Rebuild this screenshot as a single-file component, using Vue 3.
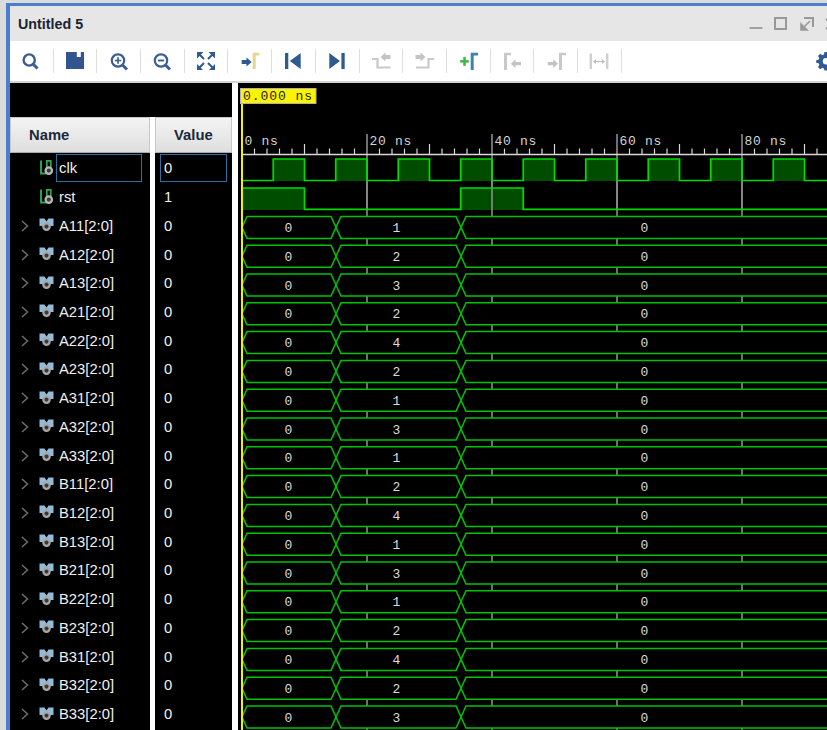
<script setup>
const names = ['A11','A12','A13','A21','A22','A23','A31','A32','A33','B11','B12','B13','B21','B22','B23','B31','B32','B33']
const mids = [1,2,3,2,4,2,1,3,1,2,4,1,3,1,2,4,2,3]
const signals = [
  { name: 'clk', value: '0', scalar: true, focus: true },
  { name: 'rst', value: '1', scalar: true },
  ...names.map((n) => ({ name: n + '[2:0]', value: '0', scalar: false })),
]
const pitch = 28.8
const X0 = 242
const scale = 6.25
const buses = mids.map((m, i) => {
  const c = 227.4 + i * pitch
  const t = c - 11
  const b = c + 11
  return {
    m,
    c,
    segs: [
      `242,${c} 247,${t} 331,${t} 336,${c} 331,${b} 247,${b}`,
      `336,${c} 341,${t} 456,${t} 461,${c} 456,${b} 341,${b}`,
      `461,${c} 466,${t} 840,${t} 840,${b} 466,${b}`,
    ],
  }
})
const at = (ns) => X0 + ns * scale
const minor = Array.from({ length: 48 }, (_, i) => X0 + 12.5 * i).filter((x, i) => i % 5 !== 0)
const major = [10, 30, 50, 70, 90].map((n) => at(n) )
const labels = [0, 20, 40, 60, 80].map((n) => ({ x: at(n) + 2.5, t: n + ' ns' }))
const grid = [20, 40, 60, 80].map(at)
const clkHigh = Array.from({ length: 9 }, (_, i) => i).map((i) => ({ x: at(5 + i * 10), w: 5 * scale }))
let d = `M242 180.5`
for (const h of clkHigh) d += ` H${h.x} V159 H${h.x + h.w} V180.5`
const clkPath = d + ' H830'
const rstHigh = [
  { x: 242, w: 62.5 },
  { x: at(35), w: 62.5 },
]
const rstPath = `M242 188 H304.5 V209.3 H${at(35)} V188 H${at(45)} V209.3 H830`
</script>

<template>
  <div class="screen">
    <div class="window">
      <header class="titlebar">
        <span class="title">Untitled 5</span>
        <div class="controls">
          <svg width="14" height="14" viewBox="0 0 14 14"><rect x="0.5" y="10" width="13" height="2" fill="#a0a0a0"/></svg>
          <svg width="14" height="14" viewBox="0 0 14 14"><rect x="1" y="1" width="11" height="11" fill="none" stroke="#999" stroke-width="2"/></svg>
          <svg width="14" height="14" viewBox="0 0 14 14"><path d="M4 1H13V10" fill="none" stroke="#999" stroke-width="2"/><path d="M10 4L3 11M1 7V13H7Z" fill="#999" stroke="#999" stroke-width="1.6"/></svg>
          <svg width="14" height="14" viewBox="0 0 14 14"><path d="M1 2L12 12M12 2L1 12" fill="none" stroke="#999" stroke-width="2"/></svg>
        </div>
      </header>

      <div class="toolbar">
        <div class="tb"><svg viewBox="0 0 24 24"><circle cx="10.2" cy="11" r="5.6" fill="none" stroke="#3a5e94" stroke-width="2.4"/><path d="M14.5 15.5L18.5 19.5" stroke="#3a5e94" stroke-width="3"/></svg></div><i class="sep"></i>
        <div class="tb"><svg viewBox="0 0 24 24"><path d="M3 3H21V20H3Z" fill="#32558f"/><rect x="13.8" y="3" width="4" height="5" fill="#fff"/></svg></div><i class="sep"></i>
        <div class="tb"><svg viewBox="0 0 24 24"><circle cx="11" cy="11.5" r="6.2" fill="none" stroke="#3a5e94" stroke-width="2.2"/><path d="M7.8 11.5H14.2M11 8.3V14.7" stroke="#3a5e94" stroke-width="1.7"/><path d="M15.5 16L20 20.5" stroke="#3a5e94" stroke-width="3"/></svg></div><i class="sep"></i>
        <div class="tb"><svg viewBox="0 0 24 24"><circle cx="11" cy="11.5" r="6.2" fill="none" stroke="#3a5e94" stroke-width="2.2"/><path d="M7.8 11.5H14.2" stroke="#3a5e94" stroke-width="1.9"/><path d="M15.5 16L20 20.5" stroke="#3a5e94" stroke-width="3"/></svg></div><i class="sep"></i>
        <div class="tb"><svg viewBox="0 0 24 24"><g fill="#2f5a94"><path d="M3 3H9.5L3 9.5Z"/><path d="M21 3H14.5L21 9.5Z"/><path d="M3 21V15L9 21Z"/><path d="M21 21V15L15 21Z"/></g><path d="M5 5L10 10M19 5L14 10M5 19L10 14M19 19L14 14" stroke="#2f5a94" stroke-width="2"/></svg></div><i class="sep"></i>
        <div class="tb"><svg viewBox="0 0 24 24"><path d="M3.7 11H8.5V8.5L13.7 13L8.5 17.5V15H3.7Z" fill="#2f5a94"/><path d="M14.7 20V3.7H21.3V6.5H17.7V20Z" fill="#e8d48a"/></svg></div><i class="sep"></i>
        <div class="tb"><svg viewBox="0 0 24 24"><path d="M4 4H7.3V20H4ZM19.7 4V20L8.8 12Z" fill="#2f5a8e"/></svg></div><i class="sep"></i>
        <div class="tb"><svg viewBox="0 0 24 24"><path d="M4.3 4V20L15 12ZM16.4 4H19.7V20H16.4Z" fill="#2f5a8e"/></svg></div><i class="sep"></i>
        <div class="tb"><svg viewBox="0 0 24 24"><path d="M3 10H8.5V18.5H21.5" fill="none" stroke="#c9c9c9" stroke-width="2.2"/><path d="M21.5 6H16.5V3.5L11.5 8L16.5 12.5V10H21.5Z" fill="#c4c4c4"/></svg></div><i class="sep"></i>
        <div class="tb"><svg viewBox="0 0 24 24"><path d="M3 18.5H15.5V10H21" fill="none" stroke="#c9c9c9" stroke-width="2.2"/><path d="M2.5 6H7.5V3.5L12.5 8L7.5 12.5V10H2.5Z" fill="#c4c4c4"/></svg></div><i class="sep"></i>
        <div class="tb"><svg viewBox="0 0 24 24"><path d="M7 12.3H10V9.2H12V12.3H15V14.3H12V17.4H10V14.3H7Z" transform="translate(-2.5 -1)" fill="#3cb54a" stroke="#3cb54a" stroke-width="0.6"/><path d="M14.7 21V3.7H22V6.5H17.7V21Z" fill="#3f80b8"/></svg></div><i class="sep"></i>
        <div class="tb"><svg viewBox="0 0 24 24"><path d="M4 21V3.7H11V6.3H7V21Z" fill="#c9c9c9"/><path d="M21 13H15.5V10.3L10.7 14.7L15.5 19V16.3H21Z" fill="#c4c4c4"/></svg></div><i class="sep"></i>
        <div class="tb"><svg viewBox="0 0 24 24"><path d="M15 21V3.7H22V6.3H18V21Z" fill="#c9c9c9"/><path d="M3.7 13H9.2V10.3L14 14.7L9.2 19V16.3H3.7Z" fill="#c4c4c4"/></svg></div><i class="sep"></i>
        <div class="tb"><svg viewBox="0 0 24 24"><path d="M3.8 4.5V20M20.2 4.5V20" fill="none" stroke="#cfcfcf" stroke-width="2.4"/><path d="M6.5 12.5H17.5" stroke="#c0c0c0" stroke-width="1.3"/><path d="M9 10L6 12.5L9 15ZM15 10L18 12.5L15 15Z" fill="#c0c0c0"/></svg></div><i class="sep"></i>
        <div class="gear">
          <svg width="20" height="20" viewBox="0 0 20 20"><path d="M8.4 1H11.6L12 3.4L13.8 4.2L15.8 2.8L18 5L16.6 7L17.4 8.8L19.8 9.2V11.8L17.4 12.2L16.6 14L18 16L15.8 18.2L13.8 16.8L12 17.6L11.6 19.6H8.4L8 17.6L6.2 16.8L4.2 18.2L2 16L3.4 14L2.6 12.2L0.2 11.8V9.2L2.6 8.8L3.4 7L2 5L4.2 2.8L6.2 4.2L8 3.4Z" fill="#2f5a94"/><circle cx="10" cy="10.3" r="3.2" fill="#fff"/></svg>
        </div>
      </div>

      <main class="body">
        <section class="signals">
          <div class="sig-top"></div>
          <div class="sig-head">
            <div class="hcell hname">Name</div>
            <div class="hcell hvalue">Value</div>
          </div>
          <div class="sig-rows">
            <div v-for="s in signals" :key="s.name" class="sig-row">
              <div class="cell-name">
                <span class="chev">
                  <svg v-if="!s.scalar" width="8" height="12" viewBox="0 0 8 12"><path d="M1 1L6.5 6L1 11" fill="none" stroke="#6a6a6a" stroke-width="1.6"/></svg>
                </span>
                <svg v-if="s.scalar" class="sig-icon" width="15" height="16" viewBox="0 0 15 16">
                  <path d="M2 0.5V13.5H7.5" fill="none" stroke="#2fa84f" stroke-width="1.9"/>
                  <path d="M7.8 8V0.8H11.8V8" fill="none" stroke="#2fa84f" stroke-width="1.7"/>
                  <circle cx="9.8" cy="10.6" r="3.2" fill="#3a3a3a" stroke="#b8b8b8" stroke-width="2.2"/>
                </svg>
                <svg v-else class="sig-icon" width="15" height="16" viewBox="0 0 15 16">
                  <path d="M0.5 1.5H5.5L7.5 4.5L9.5 1.5H14.5V9H11L7.5 7L4 9H0.5Z" fill="#92bcda"/>
                  <circle cx="7.5" cy="9.6" r="3.2" fill="#3a3a3a" stroke="#a8a8a8" stroke-width="2.2"/>
                </svg>
                <span class="label" :class="{ focus: s.focus }">{{ s.name }}</span>
              </div>
              <div class="cell-value">
                <span class="vlabel" :class="{ focus: s.focus }">{{ s.value }}</span>
              </div>
            </div>
          </div>
        </section>

        <section class="wave">
          <svg class="wave-svg" width="589" height="647" viewBox="238 83 589 647">
            <line v-for="x in grid" :key="'g' + x" :x1="x" y1="134" :x2="x" y2="730" stroke="#8c8c8c" stroke-width="1.6"/>

            <line x1="242" y1="154.5" x2="827" y2="154.5" stroke="#d8d8d8" stroke-width="1.4"/>
            <line v-for="x in minor" :key="'m' + x" :x1="x" y1="148.5" :x2="x" y2="154" stroke="#d8d8d8" stroke-width="1.2"/>
            <line v-for="x in major" :key="'j' + x" :x1="x" y1="144" :x2="x" y2="154" stroke="#d8d8d8" stroke-width="1.2"/>
            <text v-for="l in labels" :key="l.t" :x="l.x" y="145" class="ruler">{{ l.t }}</text>

            <rect v-for="h in clkHigh" :key="'c' + h.x" :x="h.x" y="159" :width="h.w" height="22" fill="#004d00"/>
            <rect v-for="h in rstHigh" :key="'r' + h.x" :x="h.x" y="188" :width="h.w" height="22" fill="#004d00"/>
            <line v-for="x in grid" :key="'o' + x" :x1="x" y1="159" :x2="x" y2="210" stroke="#8c8c8c" stroke-width="1.6"/>
            <path :d="clkPath" fill="none" stroke="#00dc00" stroke-width="1.7"/>
            <path :d="rstPath" fill="none" stroke="#00dc00" stroke-width="1.7"/>

            <g v-for="(b, i) in buses" :key="i">
              <polygon v-for="(s, j) in b.segs" :key="j" :points="s" fill="#000" stroke="#00c400" stroke-width="1.5"/>
              <text x="288.5" :y="b.c + 4.5" class="val">0</text>
              <text x="396.5" :y="b.c + 4.5" class="val">{{ b.m }}</text>
              <text x="644.5" :y="b.c + 4.5" class="val">0</text>
            </g>

            <rect x="241" y="103" width="2" height="627" fill="#f5f000"/>
            <rect x="240.5" y="88.5" width="75.5" height="15" fill="#fbf300" stroke="#b0b0b0"/>
            <text x="243" y="100" class="cursor">0.000 ns</text>
          </svg>
        </section>
      </main>
    </div>
  </div>
</template>

<style>
html, body { margin: 0; background: #fff; overflow: hidden; }
</style>

<style scoped>
.screen {
  width: 827px;
  height: 730px;
  overflow: hidden;
  box-sizing: border-box;
  padding: 3px 0 0 6px;
  background: #dcdcdc;
  font-family: "Liberation Sans", Arial, sans-serif;
}
.window {
  height: 727px;
  box-sizing: border-box;
  border-top: 3px solid #4a7fd0;
  border-left: 4px solid #4a7fd0;
  display: flex;
  flex-direction: column;
  overflow: hidden;
}
.titlebar {
  flex: 0 0 35px;
  background: #e6e6e6;
  display: flex;
  align-items: center;
  justify-content: space-between;
}
.title {
  margin-left: 8px;
  font-size: 14.3px;
  font-weight: 700;
  color: #1c2333;
}
.controls {
  display: flex;
  gap: 11.5px;
  margin-right: -12px;
}
.toolbar {
  flex: 0 0 40px;
  background: #fff;
  display: flex;
  align-items: center;
  overflow: hidden;
}
.tb {
  width: 42.7px;
  height: 24px;
  display: flex;
  align-items: center;
  justify-content: center;
}
.tb svg {
  width: 24px;
  height: 24px;
  flex: none;
}
.sep {
  width: 1px;
  height: 24px;
  background: #dedede;
}
.gear {
  margin-left: auto;
  margin-right: -9px;
  margin-top: -1px;
  height: 20px;
}
.body {
  flex: 1;
  min-height: 0;
  display: flex;
  border-top: 2px solid #d4d4d4;
  background: #fff;
}
.signals {
  flex: 0 0 222px;
  display: flex;
  flex-direction: column;
  background: #fff;
}
.sig-top {
  height: 34px;
  background: #000;
}
.sig-head, .sig-row {
  display: grid;
  grid-template-columns: 140px 77px;
  column-gap: 5px;
}
.sig-head {
  height: 37px;
}
.hcell {
  box-sizing: border-box;
  height: 36px;
  background: linear-gradient(#f4f4f4, #dedede);
  border: 1px solid #c8c8c8;
  border-bottom-color: #aaa;
  display: flex;
  align-items: center;
  font-size: 14.8px;
  font-weight: 700;
  color: #1c2838;
}
.hname { padding-left: 18px; }
.hvalue { padding-left: 18px; }
.sig-rows {
  flex: 1;
}
.sig-row {
  height: 28.72px;
}
.sig-head, .sig-rows { background: linear-gradient(90deg, #000 140px, #fff 140px, #fff 145px, #000 145px); }
.cell-name, .cell-value {
  display: flex;
  align-items: center;
  font-size: 14.8px;
  color: #f0f0f0;
  min-width: 0;
}
.cell-name { padding-left: 11px; }
.chev {
  width: 18px;
  display: flex;
  align-items: center;
}
.sig-icon {
  flex: none;
  margin-top: -1px;
}
.label {
  box-sizing: border-box;
  width: 86px;
  height: 28px;
  margin-left: 2px;
  padding-left: 2px;
  border: 1px solid transparent;
  display: flex;
  align-items: center;
  white-space: nowrap;
}
.cell-value { padding-left: 5px; }
.vlabel {
  box-sizing: border-box;
  width: 67px;
  height: 28px;
  padding-left: 3px;
  border: 1px solid transparent;
  display: flex;
  align-items: center;
}
.focus {
  border-color: #2f6f9f;
}
.wave {
  flex: 1;
  min-width: 0;
  margin-left: 6px;
  background: #000;
  overflow: hidden;
}
.wave-svg {
  display: block;
}
.ruler {
  font-family: "Liberation Mono", monospace;
  font-size: 13px;
  letter-spacing: 0.7px;
  fill: #d4d4d4;
}
.val {
  font-family: "Liberation Mono", monospace;
  font-size: 13px;
  fill: #dcdcdc;
  text-anchor: middle;
}
.cursor {
  font-family: "Liberation Mono", monospace;
  font-size: 13px;
  letter-spacing: 0.95px;
  fill: #222;
}
</style>
